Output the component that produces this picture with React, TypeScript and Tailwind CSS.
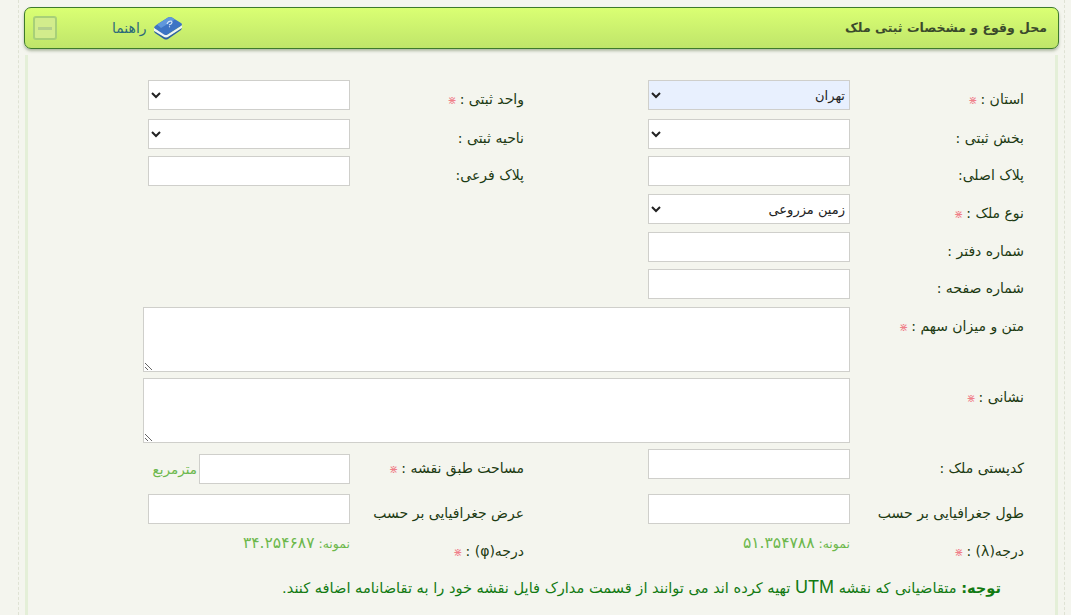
import React from 'react';

const fieldClass = 'w-[202px] border border-[#cfcfcb] outline-none text-[13px] text-[#222]';

const Star = () => <span className="text-[#f0808a] text-[11px] mx-[3px]">⋇</span>;

const Label: React.FC<{ text: string; required?: boolean }> = ({ text, required }) => (
    <label className="block pr-px text-[14px] leading-[18px] text-[#1c3a12] whitespace-nowrap">
        {text}
        {required && <Star />}
    </label>
);

const Field: React.FC<{ kind?: 'input' | 'select'; value?: string; filled?: boolean }> = ({ kind = 'input', value, filled }) =>
    kind === 'select' ? (
        <select
            defaultValue={value}
            className={`${fieldClass} h-[30px] ${filled ? 'bg-[#e8f0fe]' : 'bg-white'}`}
        >
            <option value={value}>{value}</option>
        </select>
    ) : (
        <input className={`${fieldClass} h-[30px] bg-white`} />
    );

const BookIcon = () => (
    <svg width="30" height="26" viewBox="0 0 30 26">
        <path d="M1 13 Q1 11 4 9.5 L15 2.5 Q17 1.5 19 2.5 L28 8 Q30 9.5 28 11 L14 20 Q12 21 10 20 Z" fill="#3d74c4" />
        <path d="M4 9.5 L15 2.5 Q17 1.5 19 2.5 L22 4.5 L8 13 Z" fill="#5f97dc" />
        <path d="M1 13 L11 19.5 Q13 20.5 15 19.5 L29 10.5 L29 13 L15 22 Q13 23 11 22 L1 16 Z" fill="#eef3f8" />
        <path d="M1 16 L11 22 Q13 23 15 22 L29 13 L28 15 L15 24 Q13 25 11 24 L2 18 Q1 17 1 16 Z" fill="#2b5ea8" />
        <path d="M14 9 q1 -3 4 -3 q2 1 0 3 l-2 1 M16 12 l1 -.5" stroke="#d6e6f8" strokeWidth="1.2" fill="none" />
    </svg>
);

const App: React.FC = () => {
    return (
        <div className="w-[1071px] h-[615px] overflow-hidden bg-[#f4f5ee] font-['DejaVu_Sans','Noto_Sans',sans-serif]">
            <div className="h-full ml-[18px] mr-[6px] border-x border-dashed border-[#dfe2d4] px-[5px] pt-[7px]">
                {/* Header bar */}
                <div dir="rtl" className="flex items-center h-[42px] rounded-[7px] border border-[#3d7a2c] bg-gradient-to-b from-[#daff73] to-[#bfe56a] shadow-[0_2px_3px_rgba(90,110,70,0.45)] pr-[11px]">
                    <h1 className="text-[12.5px] font-bold text-[#3b4a2c] grow">محل وقوع و مشخصات ثبتی ملک</h1>
                    <BookIcon />
                    <span className="text-[14px] text-[#2c6a7a] mr-[6px] ml-[55px]">راهنما</span>
                    <div className="w-[24px] h-[24px] ml-[8px] rounded-[3px] border-2 border-[#a8d078] flex items-center justify-center bg-[#d2ec8c]">
                        <div className="w-[14px] h-[3px] bg-[#b4d08c]" />
                    </div>
                </div>

                {/* Form body */}
                <div dir="rtl" className="mx-px mt-[6px] h-full border-x-[3px] border-[#e4efd8] pt-[25px] pr-[30px]">
                    <div className="grid grid-cols-[175px_202px_123px_175px_202px] h-[30px]">
                        <div className="pt-[10px]"><Label text="استان :" required /></div>
                        <Field kind="select" value="تهران" filled />
                        <div />
                        <div className="pt-[10px]"><Label text="واحد ثبتی :" required /></div>
                        <Field kind="select" />
                    </div>
                    <div className="grid grid-cols-[175px_202px_123px_175px_202px] h-[30px] mt-[9px]">
                        <div className="pt-[10px]"><Label text="بخش ثبتی :" /></div>
                        <Field kind="select" />
                        <div />
                        <div className="pt-[10px]"><Label text="ناحیه ثبتی :" /></div>
                        <Field kind="select" />
                    </div>
                    <div className="grid grid-cols-[175px_202px_123px_175px_202px] h-[30px] mt-[7px]">
                        <div className="pt-[10px]"><Label text="پلاک اصلی:" /></div>
                        <Field />
                        <div />
                        <div className="pt-[10px]"><Label text="پلاک فرعی:" /></div>
                        <Field />
                    </div>
                    <div className="grid grid-cols-[175px_202px] h-[30px] mt-[8px]">
                        <div className="pt-[10px]"><Label text="نوع ملک :" required /></div>
                        <Field kind="select" value="زمین مزروعی" />
                    </div>
                    <div className="grid grid-cols-[175px_202px] h-[30px] mt-[8px]">
                        <div className="pt-[10px]"><Label text="شماره دفتر :" /></div>
                        <Field />
                    </div>
                    <div className="grid grid-cols-[175px_202px] h-[30px] mt-[7px]">
                        <div className="pt-[10px]"><Label text="شماره صفحه :" /></div>
                        <Field />
                    </div>
                    <div className="grid grid-cols-[175px_707px] h-[65px] mt-[8px]">
                        <div className="pt-[10px]"><Label text="متن و میزان سهم :" required /></div>
                        <textarea className="w-[707px] h-[65px] border border-[#cfcfcb] bg-white outline-none" />
                    </div>
                    <div className="grid grid-cols-[175px_707px] h-[65px] mt-[6px]">
                        <div className="pt-[10px]"><Label text="نشانی :" required /></div>
                        <textarea className="w-[707px] h-[65px] border border-[#cfcfcb] bg-white outline-none" />
                    </div>
                    <div className="grid grid-cols-[175px_202px_123px_175px_202px] h-[30px] mt-[6px]">
                        <div className="pt-[10px]"><Label text="کدپستی ملک :" /></div>
                        <Field />
                        <div />
                        <div className="pt-[10px]"><Label text="مساحت طبق نقشه :" required /></div>
                        <div className="flex items-center mt-[5px]">
                            <input className="w-[151px] h-[30px] border border-[#cfcfcb] bg-white outline-none" />
                            <span className="text-[13.5px] text-[#6cb84c] mr-[2px] whitespace-nowrap">مترمربع</span>
                        </div>
                    </div>
                    <div className="grid grid-cols-[175px_202px_123px_175px_202px] h-[30px] mt-[15px]">
                        <div className="pt-[10px]"><Label text="طول جغرافیایی بر حسب" /></div>
                        <Field />
                        <div />
                        <div className="pt-[10px]"><Label text="عرض جغرافیایی بر حسب" /></div>
                        <Field />
                    </div>
                    <div className="grid grid-cols-[175px_202px_123px_175px_202px] h-[30px] mt-[8px]">
                        <div className="pt-[10px]"><Label text="درجه(λ) :" required /></div>
                        <p className="text-[12.5px] text-[#6cb84c]">نمونه: <span className="text-[15.5px]">۵۱.۳۵۴۷۸۸</span></p>
                        <div />
                        <div className="pt-[10px]"><Label text="درجه(φ) :" required /></div>
                        <p className="text-[12.5px] text-[#6cb84c]">نمونه: <span className="text-[15.5px]">۳۴.۲۵۴۶۸۷</span></p>
                    </div>
                    <p className="mt-[15px] mr-[24px] text-[14.6px] leading-[20px] text-[#127a12] whitespace-nowrap">
                        <b>توجه:</b> متقاضیانی که نقشه <span className="font-['Liberation_Sans'] text-[18px]">UTM</span> تهیه کرده اند می توانند از قسمت مدارک فایل نقشه خود را به تقاضانامه اضافه کنند.
                    </p>
                </div>
            </div>
        </div>
    );
};

export default App;
